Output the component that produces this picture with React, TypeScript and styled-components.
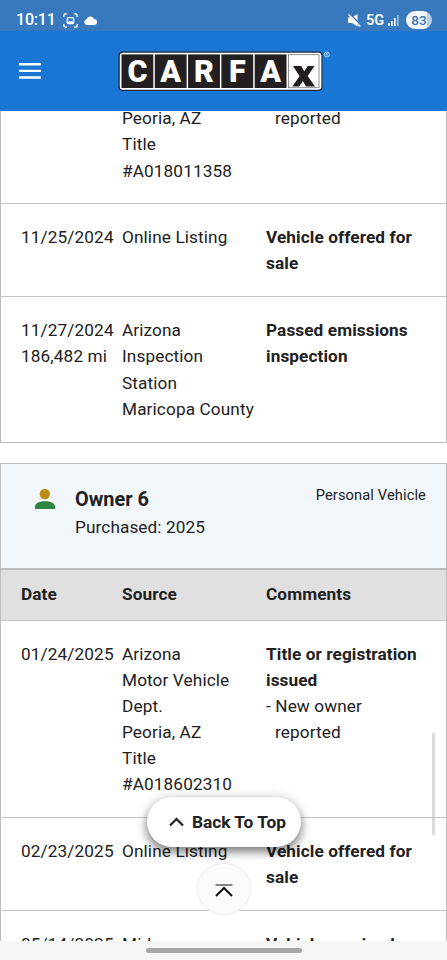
import React from 'react';
import styled, { createGlobalStyle } from 'styled-components';

const GlobalStyle = createGlobalStyle`
  * { box-sizing: border-box; }
  body { margin: 0; background: #fff; font-family: Roboto, "Liberation Sans", sans-serif; }
`;

const Screen = styled.div`
  position: relative;
  display: flex;
  flex-direction: column;
  width: 447px;
  height: 960px;
  overflow: hidden;
  background: #fff;
  color: #212121;
`;

const StatusBar = styled.div`
  flex: none;
  display: flex;
  align-items: center;
  justify-content: space-between;
  height: 31px;
  padding: 9px 15px 0 16px;
  background: #3878be;
  color: #fff;
`;

const StatusGroup = styled.div`
  display: flex;
  align-items: center;
  height: 22px;
`;

const Clock = styled.span`
  width: 38px;
  margin-right: 9px;
  font-size: 16px;
  font-weight: 500;
  line-height: 22px;
  letter-spacing: -0.2px;
`;

const CloudIcon = styled.svg`
  margin-left: 6px;
`;

const Network = styled.span`
  width: 18px;
  margin: 0 4px 0 5px;
  font-size: 14.5px;
  font-weight: 600;
`;

const Battery = styled.span`
  width: 26px;
  height: 18px;
  margin-left: 7px;
  border-radius: 9px;
  background: linear-gradient(90deg, #f3f8ff 82%, #b4cfee 82%);
  color: #3d75b4;
  font-size: 13.5px;
  font-weight: 500;
  line-height: 18px;
  text-align: center;
`;

const NavBar = styled.header`
  flex: none;
  display: flex;
  align-items: flex-start;
  height: 80px;
  padding: 20px 0 0 19px;
  background: #1976d5;
`;

const MenuButton = styled.button`
  display: block;
  width: 22px;
  height: 16px;
  margin: 12px 77px 0 0;
  padding: 0;
  border: 0;
  background: none;
`;

const Logo = styled.svg`
  display: block;
`;

const Report = styled.main`
  flex: none;
  height: 830px;
  overflow: hidden;
`;

const Card = styled.section<{ $continued?: boolean }>`
  margin-bottom: 20.1px;
  border: 1px solid #bdbdbd;
  border-top-width: ${(p) => (p.$continued ? 0 : 1)}px;
`;

const Record = styled.div<{ $clipped?: boolean }>`
  display: grid;
  grid-template-columns: 101px 144px 170px;
  margin-top: ${(p) => (p.$clipped ? -5.7 : 0)}px;
  padding: ${(p) => (p.$clipped ? 0 : 19.9)}px 0 19.9px 20px;
  font-size: 17.2px;
  line-height: 26.1px;
  letter-spacing: 0.12px;
  white-space: nowrap;
  & + & { border-top: 1px solid #c4c4c4; }
`;

const Heading = styled(Record)`
  padding: 11px 0 13px 20px;
  border-top: 2px solid #bdbdbd;
  background: #e0e0e0;
  line-height: 26px;
  font-weight: 700;
`;

const Line = styled.div<{ $bold?: boolean; $indent?: boolean }>`
  padding-left: ${(p) => (p.$indent ? 9 : 0)}px;
  font-weight: ${(p) => (p.$bold ? 700 : 400)};
  letter-spacing: ${(p) => (p.$bold ? 0.1 : 0.12)}px;
`;

const Owner = styled.div`
  display: flex;
  height: 104.4px;
  padding: 21px 20px 0 33px;
  background: #f2f7fc;
`;

const Person = styled.svg`
  margin: 3px 19px 0 0;
`;

const OwnerText = styled.div`
  flex: 1;
`;

const OwnerName = styled.div`
  padding-top: 1px;
  font-size: 19.9px;
  font-weight: 700;
  line-height: 27px;
`;

const Purchased = styled.div`
  font-size: 17.2px;
  line-height: 28px;
  letter-spacing: 0.1px;
`;

const Usage = styled.div`
  font-size: 14.7px;
  line-height: 20px;
  letter-spacing: 0.1px;
`;

const BackToTop = styled.button`
  position: absolute;
  left: 147px;
  top: 797px;
  display: flex;
  align-items: center;
  gap: 8px;
  width: 154px;
  height: 50px;
  padding: 0 0 0 22px;
  border: 0;
  border-radius: 25px;
  background: #fff;
  box-shadow: 0 5px 8px rgba(0, 0, 0, 0.4), 0 2px 14px rgba(0, 0, 0, 0.22);
  color: #212121;
  font: 700 17.3px/26px Roboto, sans-serif;
  white-space: nowrap;
`;

const ScrollTop = styled.button`
  position: absolute;
  left: 197px;
  top: 863px;
  display: grid;
  place-items: center;
  width: 54px;
  height: 52px;
  padding: 2px 0 0;
  border: 1px solid #f0f0f0;
  border-radius: 50%;
  background: #fbfbfb;
  box-shadow: 0 0 2px rgba(0, 0, 0, 0.08);
`;

const ScrollThumb = styled.div`
  position: absolute;
  left: 432px;
  top: 733px;
  width: 3px;
  height: 102px;
  background: rgba(190, 190, 190, 0.55);
`;

const GestureBar = styled.footer`
  flex: none;
  display: flex;
  justify-content: center;
  height: 19px;
  padding-top: 7px;
  background: #f5f5f5;
`;

const GestureHandle = styled.div`
  width: 156px;
  height: 5px;
  border-radius: 3px;
  background: #a6a6a6;
`;

type Entry = { date: string[]; source: string[]; title: string[]; notes?: string[] };

const previousOwner: Entry[] = [
  { date: ['11/25/2024'], source: ['Online Listing'], title: ['Vehicle offered for', 'sale'] },
  {
    date: ['11/27/2024', '186,482 mi'],
    source: ['Arizona', 'Inspection', 'Station', 'Maricopa County'],
    title: ['Passed emissions', 'inspection'],
  },
];

const currentOwner: Entry[] = [
  {
    date: ['01/24/2025'],
    source: ['Arizona', 'Motor Vehicle', 'Dept.', 'Peoria, AZ', 'Title', '#A018602310'],
    title: ['Title or registration', 'issued'],
    notes: ['- New owner', 'reported'],
  },
  { date: ['02/23/2025'], source: ['Online Listing'], title: ['Vehicle offered for', 'sale'] },
  { date: ['05/14/2025'], source: ['Midas'], title: ['Vehicle serviced'] },
];

function Row({ entry }: { entry: Entry }) {
  return (
    <Record>
      <div>{entry.date.map((t) => <Line key={t}>{t}</Line>)}</div>
      <div>{entry.source.map((t) => <Line key={t}>{t}</Line>)}</div>
      <div>
        {entry.title.map((t) => <Line key={t} $bold>{t}</Line>)}
        {entry.notes?.map((t, i) => <Line key={t} $indent={i > 0}>{t}</Line>)}
      </div>
    </Record>
  );
}

const LogoLetter = styled.text`
  font-family: Roboto, sans-serif;
  font-size: 30.5px;
  font-weight: 900;
  text-anchor: middle;
`;

function CarfaxLogo() {
  return (
    <Logo width="216" height="44" viewBox="0 0 216 44">
      <rect x="0.5" y="0.5" width="204" height="39.4" rx="4" fill="#202a3c" />
      <rect x="1.8" y="1.7" width="201.6" height="37" rx="3" fill="#fff" />
      {['C', 'A', 'R', 'F', 'A'].map((letter, i) => (
        <g key={i}>
          <rect x={3.5 + i * 33.3} y="3.4" width="31.8" height="33.6" fill="#231f20" />
          <LogoLetter x={19.4 + i * 33.3} y="31" fill="#fff">{letter}</LogoLetter>
        </g>
      ))}
      <rect x="170.5" y="3.7" width="30.5" height="33" fill="#fff" stroke="#777" strokeWidth="0.8" />
      <path d="M175 15h8.200l3 5.300 3.600-5.300h6.700l-6.800 10 7.300 10.500h-9l-3.200-5.600-3.600 5.600h-6.900l7.200-10.300z" fill="#231f20" />
      <circle cx="208.8" cy="3.5" r="2.5" fill="none" stroke="#c5dcf5" strokeWidth="0.9" />
      <path d="M208 4.700V2.500h1q.7 0 .7.6t-.7.6h-.8m.8 0 .8 1" fill="none" stroke="#c5dcf5" strokeWidth="0.6" />
    </Logo>
  );
}

export default function App() {
  return (
    <Screen>
      <GlobalStyle />
      <StatusBar>
        <StatusGroup>
          <Clock>10:11</Clock>
          <svg width="15" height="15" viewBox="0 0 15 15" fill="none" stroke="#fff" strokeWidth="1.4">
            <path d="M.8 4V2.8a2 2 0 0 1 2-2H4M11 .8h1.2a2 2 0 0 1 2 2V4M14.2 11v1.2a2 2 0 0 1-2 2H11M4 14.2H2.8a2 2 0 0 1-2-2V11" />
            <rect x="4.4" y="4.6" width="6.2" height="6" rx="1" />
            <path d="m4.5 10 2.2-2 1.2.8 1-1 1.7 1.6v1.2H4.5z" fill="#fff" stroke="none" />
          </svg>
          <CloudIcon width="13" height="9" viewBox="0 0 13 9" fill="#fff">
            <path d="M3 9a2.9 2.9 0 0 1-.5-5.7A4 4 0 0 1 10 3a3 3 0 0 1 .2 6z" />
          </CloudIcon>
        </StatusGroup>
        <StatusGroup>
          <svg width="13" height="13" viewBox="0 0 13 13">
            <path d="M0 3.500h4L9.500 0v12.500L4 9H0z" fill="#fff" />
            <path d="m1.300-.5 12 12" stroke="#3878be" strokeWidth="1.6" />
            <path d="m.5.500 11.800 12" stroke="#fff" strokeWidth="1.5" />
          </svg>
          <Network>5G</Network>
          <svg width="11" height="12" viewBox="0 0 11 12" fill="#fff">
            <path d="M0 9h1.700v3H0zM3 7h1.700v5H3zM6 4h1.700v8H6z" />
            <path d="M9 1h1.700v11H9z" opacity=".5" />
          </svg>
          <Battery>83</Battery>
        </StatusGroup>
      </StatusBar>

      <NavBar>
        <MenuButton aria-label="Menu">
          <svg width="22" height="16" viewBox="0 0 22 16" fill="#fff">
            <path d="M0 0h22v2.400H0zM0 6.700h22v2.400H0zM0 13.300h22v2.400H0z" />
          </svg>
        </MenuButton>
        <CarfaxLogo />
      </NavBar>

      <Report>
        <Card $continued>
          <Record $clipped>
            <div />
            <div>
              <Line>Peoria, AZ</Line>
              <Line>Title</Line>
              <Line>#A018011358</Line>
            </div>
            <Line $indent>reported</Line>
          </Record>
          {previousOwner.map((entry) => <Row key={entry.date[0]} entry={entry} />)}
        </Card>
        <Card>
          <Owner>
            <Person width="22" height="22" viewBox="0 0 22 22">
              <circle cx="10.8" cy="6" r="5.2" fill="#bb8d17" />
              <path d="M1 21v-2.500c0-3.500 5-5.300 10-5.300s10 1.800 10 5.300V21z" fill="#2e8540" />
            </Person>
            <OwnerText>
              <OwnerName>Owner 6</OwnerName>
              <Purchased>Purchased: 2025</Purchased>
            </OwnerText>
            <Usage>Personal Vehicle</Usage>
          </Owner>
          <Heading>
            <div>Date</div>
            <div>Source</div>
            <div>Comments</div>
          </Heading>
          {currentOwner.map((entry) => <Row key={entry.date[0]} entry={entry} />)}
        </Card>
      </Report>

      <GestureBar>
        <GestureHandle />
      </GestureBar>

      <ScrollThumb />
      <BackToTop>
        <svg width="15" height="10" viewBox="0 0 15 10" fill="none" stroke="#212121" strokeWidth="2.2">
          <path d="m1 8.500 6.500-6.500L14 8.500" />
        </svg>
        Back To Top
      </BackToTop>
      <ScrollTop aria-label="Scroll to top">
        <svg width="18" height="13" viewBox="0 0 18 13" fill="none">
          <path d="M.5 1h17" stroke="#666" strokeWidth="1.6" />
          <path d="m1 12 8-8 8 8" stroke="#111" strokeWidth="2" />
        </svg>
      </ScrollTop>
    </Screen>
  );
}
